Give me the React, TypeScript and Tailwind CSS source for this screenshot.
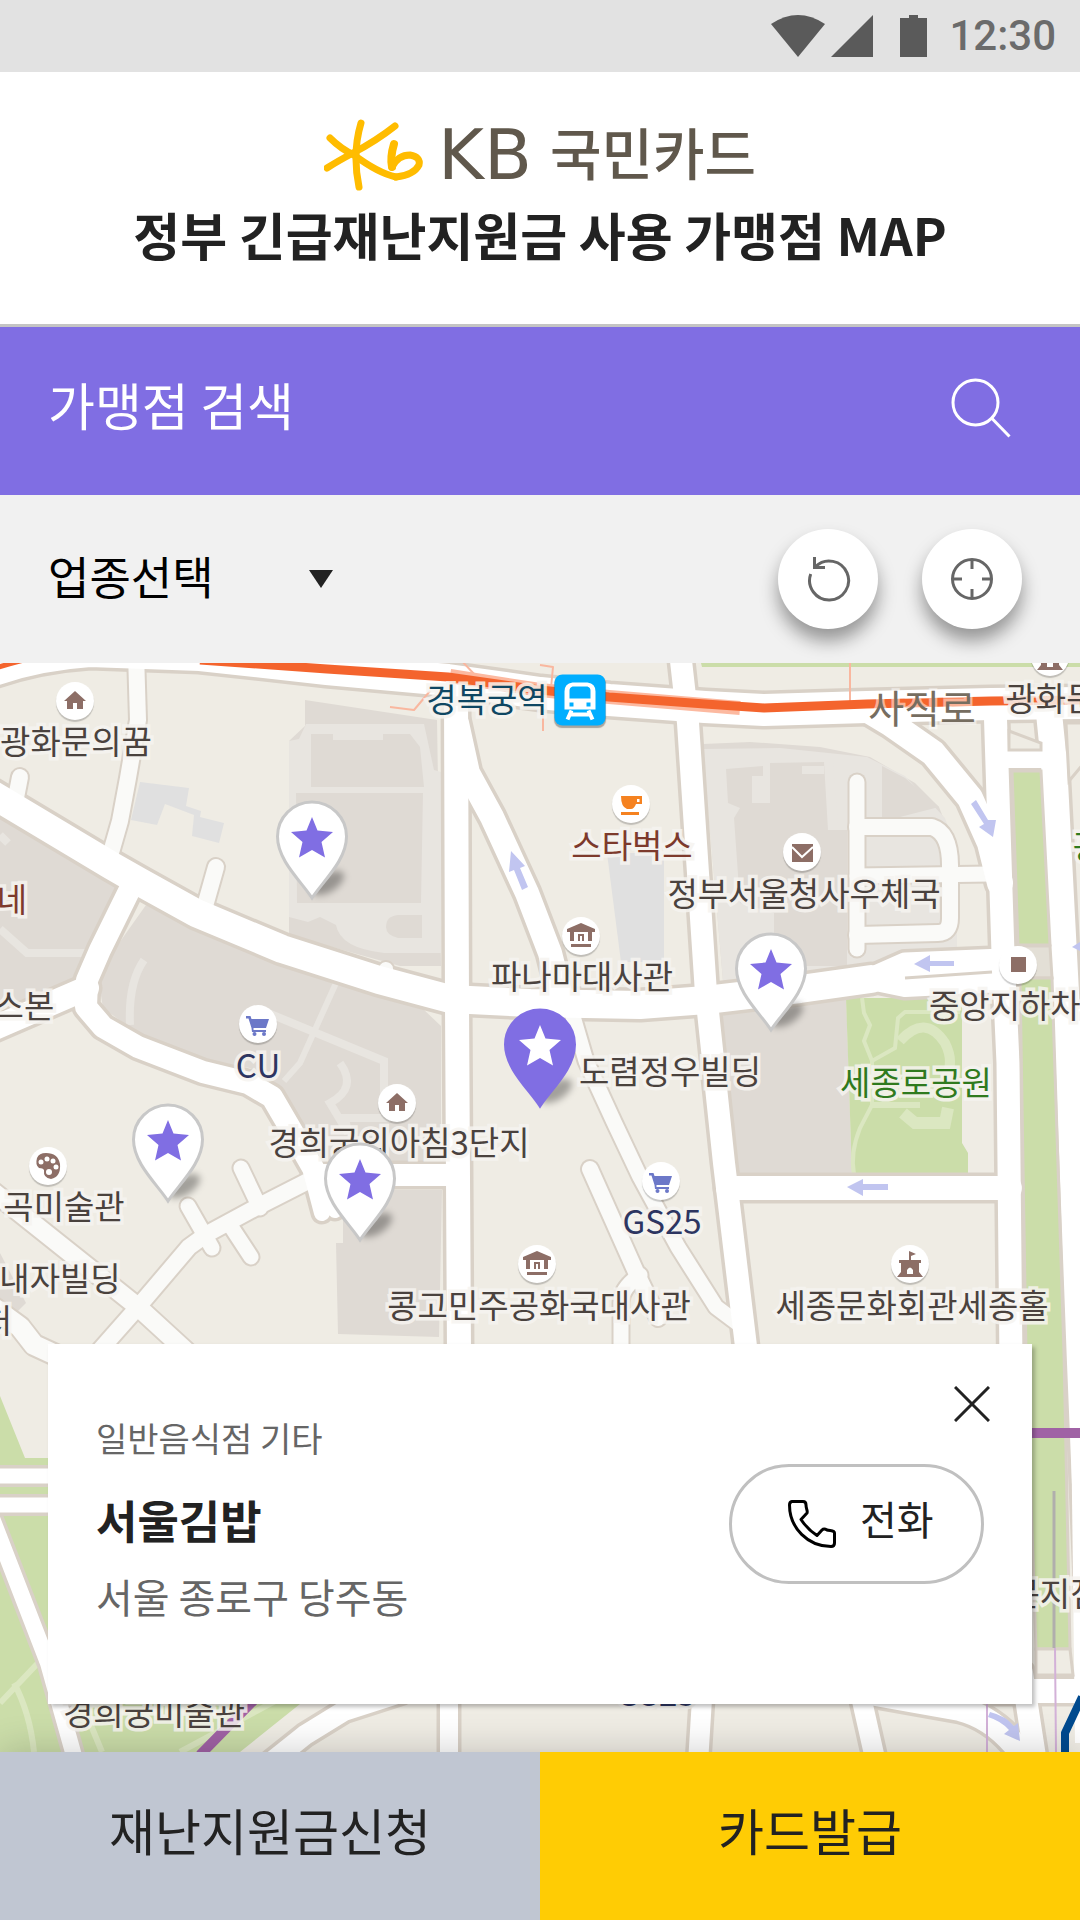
import { useState } from 'react';

const MAP_W = 1080;
const MAP_H = 1089;

const categories = ['업종선택', '일반음식점', '편의점', '카페', '병원'];

type Road = { d: string; w: number; soft?: boolean };

const roads: Road[] = [
  // alleys
  { d: 'M20 114 L14 145', w: 16, soft: true },
  { d: 'M136 -10 L138 57 L128 115 L120 158 L108 200', w: 16, soft: true },
  { d: 'M216 204 L203 250', w: 16, soft: true },
  { d: 'M386 306 L388 325', w: 14, soft: true },
  { d: 'M241 505 L260 545', w: 15, soft: true },
  { d: 'M188 543 L212 585', w: 15, soft: true },
  { d: 'M230 562 L251 594', w: 15, soft: true },
  { d: 'M312 516 L255 545 L207 571 L189 584 L138 644 L85 704', w: 16, soft: true },
  { d: 'M-10 526 L138 644 L210 710', w: 18, soft: true },
  { d: 'M-10 642 L20 664 L34 682 L60 694', w: 20, soft: true },
  { d: 'M857 119 V286', w: 15, soft: true },
  { d: 'M857 164 H932 Q950 170 950 202 V255 Q950 270 938 270 L857 272', w: 16, soft: true },
  { d: 'M857 213 L990 211', w: 15, soft: true },
  { d: 'M572 350 L586 398 L614 459 L640 514 L678 584 L716 644 L740 662', w: 15, soft: true },
  { d: 'M590 506 L636 609 L658 655', w: 16, soft: true },
  { d: 'M640 612 Q621 625 621 640 V700', w: 15, soft: true },
  // streets
  { d: 'M311 508 L322 550', w: 16 },
  { d: 'M322 512 L335 547', w: 16 },
  { d: 'M132 222 L100 287 L87 317 L86 344 L103 364 L138 384 L203 409 L248 420 L272 434 L293 470 L317 512 H458', w: 22 },
  { d: 'M87 325 L-10 367', w: 24 },
  { d: 'M-10 130 L112 203 L140 219 L196 250 L282 286 L379 317 L450 336 L530 340 L640 342 L706 337 L800 326 L871 316', w: 28 },
  { d: 'M456 30 L457 340 L459 690', w: 24 },
  { d: 'M457 60 L468 110 L492 154 L527 230 L550 290 L562 338', w: 24 },
  { d: 'M679 -20 L688 60 L706 330 L724 500 L748 700', w: 22 },
  { d: 'M871 316 L905 301 L1003 297', w: 23 },
  { d: 'M871 316 L905 323 L1003 318', w: 22 },
  { d: 'M728 525 H1010', w: 24 },
  { d: 'M870 48 L890 60 L933 90 L970 135 L990 180 L1000 220', w: 26 },
  { d: 'M995 40 L1003 290 L1008 400 L1011 700', w: 23 },
  { d: 'M1000 96 H1060', w: 18 },
  { d: 'M1048 40 L1054 100 L1066 330 L1080 700 L1094 1040', w: 26 },
  { d: 'M-20 12 Q30 -8 90 -12 L200 -8 L327 6 L448 17 L540 30 L609 37 L705 44 L764 47 L867 44 L991 41 L1090 40', w: 32 },
  // lower edge
  { d: 'M-10 813 H60', w: 15 },
  { d: 'M-10 842 H60', w: 15 },
  { d: 'M-10 850 L48 1000 L76 1100', w: 16 },
  { d: 'M400 1030 L344 1048 L305 1072 L270 1100', w: 20 },
  { d: 'M449 1030 V1100', w: 18 },
  { d: 'M703 1020 L698 1100', w: 20 },
  { d: 'M858 1020 L876 1100', w: 20 },
  { d: 'M870 1030 L960 1046 Q1000 1056 1028 1100', w: 24 },
  { d: 'M860 1028 H1090', w: 24 },
  { d: 'M1022 1010 L1036 1100', w: 22 },
];

const blocks = [
  { fill: '#dfdad4', d: 'M305 37 L437 57 L441 303 L400 303 L289 272 V78 L305 63Z' },
  { fill: '#e8e5e0', d: 'M306 61 H424 L434 107 L441 109 V290 H384 Q340 285 336 262 L320 254 L308 259 L289 254 V78 L299 76Z' },
  { fill: '#dfdad4', d: 'M311 71 H333 V77 H383 V71 H410 L420 84 L424 124 H311Z' },
  { fill: '#dfdad4', d: 'M296 130 H423 L421 240 H297Z' },
  { fill: '#dfdad4', d: 'M398 252 H422 V275 H398 Q386 272 386 264 Q386 253 398 252Z' },
  { fill: '#e0e0e0', d: 'M140 119 L189 125 L186 143 L201 148 L200 154 L224 160 L219 180 L192 173 L194 152 L165 141 L157 162 L131 157Z' },
  { fill: '#e0e0e0', d: 'M607 190 H664 V299 H621Z' },
  { fill: '#dfdad4', d: 'M0 150 L121 227 L77 315 L0 345Z' },
  { fill: '#dfdad4', d: 'M146 242 L196 266 L276 300 L441 352 V500 H312 L290 440 L250 405 L205 398 L140 372 L103 345 L99 320 L112 290Z' },
  { fill: '#efece4', d: 'M422 345 L441 350 V363Z' },
  { fill: '#dfdad4', d: 'M343 527 H442 L439 674 L338 671 L336 580 H343Z' },
  { fill: '#dfdad4', d: 'M703 81 L750 79 L820 84 L870 94 L915 120 L939 144 L957 190 V287 L875 300 L723 318Z' },
  { fill: '#e8e5e0', d: 'M703 86 L780 85 L867 94 L905 113 L945 155 L957 190 V287 L875 300 L723 318Z' },
  { fill: '#dfdad4', d: 'M726 106 L763 103 V140 H770 V100 L824 99 L828 167 H847 V303 H774 V250 L740 240 L734 155 L740 145 L728 140Z' },
  { fill: '#dfdad4', d: 'M882 103 L905 115 L939 144 L900 154 H882Z' },
  { fill: '#e8e5e0', d: 'M752 113 H770 V140 H752Z' },
  { fill: '#dfdad4', d: 'M722 350 L846 330 L852 512 H737Z' },
  { fill: '#cbdda9', d: 'M846 335 H962 V480 L968 490 V511 H852Z' },
  { fill: '#dfdad4', d: 'M0 590 L26 640 L14 652 L0 645Z' },
  { fill: '#cbdda9', d: 'M0 733 L25 795 H60 V850 H130 V1041 H300 L240 1089 H0Z' },
  { fill: '#cbdda9', d: 'M700 -4 H1080 V4 H702Z' },
];

const boulevard = [
  { fill: '#efece4', d: 'M1009 68 L1041 80 V87 H1009Z' },
  { fill: '#cbdda9', d: 'M1012 108 H1041 L1050 282 H1018Z' },
  { fill: '#e3dfd6', d: 'M1018 283 H1050 L1052 315 H1020Z' },
  { fill: '#cbdda9', d: 'M1020 315 H1052 L1064 690 L1070 986 H1036 L1026 690Z' },
  { fill: '#efece4', d: 'M1036 986 H1070 L1073 1012 H1036Z' },
  { fill: '#efece4', d: 'M1066 60 H1084 V100 L1069 118Z' },
];

type Poi = { x: number; y: number; icon: string };

const pois: Poi[] = [
  { x: 75, y: 38, icon: 'home' },
  { x: 631, y: 141, icon: 'cup' },
  { x: 802, y: 189, icon: 'mail' },
  { x: 581, y: 273, icon: 'bank' },
  { x: 1018, y: 302, icon: 'square' },
  { x: 258, y: 361, icon: 'cart' },
  { x: 397, y: 440, icon: 'home' },
  { x: 48, y: 503, icon: 'palette' },
  { x: 661, y: 518, icon: 'cart' },
  { x: 537, y: 601, icon: 'bank' },
  { x: 910, y: 601, icon: 'castle' },
  { x: 1050, y: -6, icon: 'castle' },
];

// x is the middle of the label
const labels = [
  { text: '광화문의꿈', x: 76, y: 79, tone: 'text-[#4a423e]' },
  { text: '경복궁역', x: 487, y: 37, tone: 'text-[#0f4763]' },
  { text: '광화문', x: 1051, y: 36, tone: 'text-[#4a423e]' },
  { text: '스타벅스', x: 632, y: 183, tone: 'text-[#7d3a2c]' },
  { text: '정부서울청사우체국', x: 804, y: 231, tone: 'text-[#4a423e]' },
  { text: '파나마대사관', x: 582, y: 314, tone: 'text-[#4a423e]' },
  { text: '중앙지하차도', x: 1020, y: 343, tone: 'text-[#4a423e]' },
  { text: '네', x: 12, y: 237, tone: 'text-[#7d3a2c]' },
  { text: '스본', x: 24, y: 343, tone: 'text-[#4a423e]' },
  { text: '광', x: 1088, y: 184, tone: 'text-[#2f7a1e]' },
  { text: 'CU', x: 258, y: 403, tone: 'text-[#2d3561]' },
  { text: '도렴정우빌딩', x: 670, y: 409, tone: 'text-[#4a423e]' },
  { text: '세종로공원', x: 916, y: 420, tone: 'text-[#2f7a1e]' },
  { text: '경희궁의아침3단지', x: 399, y: 480, tone: 'text-[#4a423e]' },
  { text: '곡미술관', x: 64, y: 544, tone: 'text-[#4a423e]' },
  { text: '내자빌딩', x: 60, y: 616, tone: 'text-[#4a423e]' },
  { text: '처', x: -3, y: 658, tone: 'text-[#4a423e]' },
  { text: 'GS25', x: 662, y: 559, tone: 'text-[#2d3561]' },
  { text: '콩고민주공화국대사관', x: 539, y: 643, tone: 'text-[#4a423e]' },
  { text: '세종문화회관세종홀', x: 912, y: 643, tone: 'text-[#4a423e]' },
  { text: '문지점', x: 1055, y: 931, tone: 'text-[#4a423e]' },
  { text: '경희궁미술관', x: 154, y: 1050, tone: 'text-[#4a423e]' },
  { text: 'GS25', x: 656, y: 1031, tone: 'text-[#2d3561]' },
];

const pins = [
  { x: 312, y: 236 },
  { x: 771, y: 368 },
  { x: 168, y: 539 },
  { x: 360, y: 578 },
  { x: 540, y: 444, active: true },
];

function place(x: number, y: number) {
  return { left: `${(x / MAP_W) * 100}%`, top: `${(y / MAP_H) * 100}%` };
}

function PoiGlyph({ icon }: { icon: string }) {
  if (icon === 'home') return <path fill="#8d6e66" d="M19 9 L30 19 H27 V27 H21 V21 H17 V27 H11 V19 H8Z" />;
  if (icon === 'cup') {
    return (
      <g fill="#f58220">
        <path fillRule="evenodd" d="M9 11 H30 V19 H24 Q22 24 19 24 H15 Q9 22 9 11Z M25 14 V17 H27.500 V14Z" />
        <path d="M9 27 H27 V30 H9Z" />
      </g>
    );
  }
  if (icon === 'mail') {
    return (
      <g>
        <path fill="#8d6e66" d="M9 11 H30 V29 H9Z" />
        <path fill="none" stroke="#fff" strokeWidth="2" d="M9 14 L19 24 L30 14" />
      </g>
    );
  }
  if (icon === 'bank') {
    return (
      <g>
        <path fill="#8d6e66" d="M19 6 L33 12 V15 H30 V24 H8 V15 H5 V12Z M9 27 H29 V30 H9Z" />
        <path fill="#fff" d="M12 15 H26 V17 H12Z M12 17 H16 V24 H12Z M18 19 H20 V24 H18Z M22 17 H26 V24 H22Z" />
      </g>
    );
  }
  if (icon === 'square') return <path fill="#8d6e66" d="M12 11 H27 V26 H12Z" />;
  if (icon === 'cart') {
    return (
      <g fill="#6c78c8">
        <path d="M7 11 H11.500 L12.500 14 H30 L27 23 H14.500 V25 H27 V27 H13 L12.500 23 L9.500 13.500 H7Z" />
        <circle cx="15.500" cy="29" r="2" />
        <circle cx="25" cy="29" r="2" />
      </g>
    );
  }
  if (icon === 'palette') {
    return (
      <g>
        <path fill="#8d6e66" d="M17 6 Q29 6 31 17 Q32 30 22 32 Q14 31 15 23 Q14 21 10 21 Q6 18 8 11 Q10 6 17 6Z" />
        <g fill="#fff">
          <circle cx="12" cy="15" r="2.500" />
          <circle cx="18" cy="12" r="2.500" />
          <circle cx="24" cy="14" r="2.500" />
          <circle cx="27" cy="20" r="2.500" />
          <circle cx="20" cy="25" r="3" />
        </g>
      </g>
    );
  }
  return (
    <g>
      <path fill="#8d6e66" d="M18 6 L25 9 L20 11 V15 H30 V18 H28 V27 L32 32 H6 L10 27 V18 H8 V15 H18Z" />
      <path fill="#fff" d="M16 29 V25 Q19 20 22 25 V29Z" />
    </g>
  );
}

function MapPin({ active }: { active?: boolean }) {
  return (
    <svg viewBox="0 0 104 110" className="w-[104px] h-[110px]" aria-hidden="true">
      <ellipse cx="68" cy="84" rx="18" ry="9" fill="#000" fillOpacity="0.32" transform="rotate(-32 68 84)" filter="url(#pin-blur)" />
      <path
        d="M52 99 C42 83 17.500 62 17.500 37.500 A34.500 34.500 0 0 1 86.500 37.500 C86.500 62 62 83 52 99Z"
        fill={active ? '#806ee3' : '#fff'}
        stroke={active ? '#806ee3' : '#c8c8c8'}
        strokeWidth="3"
      />
      <path
        d="M52 18 L57.500 31.500 L73 33 L61.500 43 L65 58.500 L52 51 L39 58.500 L42.500 43 L31 33 L46.500 31.500Z"
        fill={active ? '#fff' : '#806ee3'}
      />
    </svg>
  );
}

function MapDrawing() {
  return (
    <svg viewBox="0 0 1080 1089" className="block w-full" aria-hidden="true">
      <defs>
        <filter id="pin-blur" x="-50%" y="-50%" width="200%" height="200%">
          <feGaussianBlur stdDeviation="3.500" />
        </filter>
      </defs>
      <rect width="1080" height="1089" fill="#efece4" />
      {blocks.map((b) => (
        <path key={b.d} d={b.d} fill={b.fill} />
      ))}

      {/* footpaths inside the blocks */}
      <g fill="none" stroke="#e8e5e0" strokeWidth="8">
        <path d="M0 266 L27 290 H85 M0 172 L8 180" />
        <path d="M144 297 Q128 320 130 362" />
        <path d="M336 320 L300 400 L284 418" strokeWidth="6" />
        <path d="M268 350 L384 398 V440" />
        <path d="M340 400 Q358 425 330 440 L348 470 L345 455 H390" />
        <path d="M829 100 L834 160 M802 107 H824" />
      </g>
      <g fill="none" stroke="#dbe7c1" strokeWidth="4">
        <path d="M862 335 L864 350 L870 362 L864 378 L872 398 L895 385 L898 355 L905 349 H960" />
        <path d="M872 398 V442 L860 465 Q850 490 854 511" />
        <path d="M872 442 H920" strokeWidth="6" />
        <path d="M900 378 Q925 350 945 380 Q955 400 945 415" strokeWidth="10" />
        <path d="M903 450 L915 460 H945 L948 445" strokeWidth="12" />
        <path d="M0 1040 L38 1000 M14 1020 Q30 1050 34 1089 M90 1060 L102 1089 M180 1089 L290 1030" strokeWidth="6" />
      </g>

      <g fill="none" strokeLinejoin="round" strokeLinecap="round">
        {roads.map((r) => (
          <path key={r.d} d={r.d} stroke="#d9d1c7" strokeWidth={r.w + (r.soft ? 4 : 7)} />
        ))}
        {roads.map((r) => (
          <path key={r.d} d={r.d} stroke={r.soft ? '#fafaf8' : '#fff'} strokeWidth={r.w} />
        ))}
      </g>
      <path stroke="#d9d1c7" strokeWidth="3" d="M905 315 L992 309" />
      <path fill="#fff" d="M1066 340 L1080 340 V1080 H1075Z" />
      {boulevard.map((b) => (
        <path key={b.d} d={b.d} fill={b.fill} stroke="#d9d1c7" strokeWidth="3" />
      ))}

      {/* arterial road */}
      <g fill="none" strokeLinejoin="round">
        <path stroke="#f9b79f" strokeWidth="2" d="M850 0 V38 M390 44 L414 47 L430 28 M460 -4 L475 12 M540 2 L553 4 L551 25 M543 48 V68" />
        <path stroke="#fcb9a0" strokeWidth="14" d="M450 13 L540 27 L609 34 L740 45" />
        <path stroke="#f4642d" strokeWidth="9" d="M200 -3 L327 6 L448 14 L540 27 L609 34 L705 41 L764 45 L867 41 L991 38 L1080 37" />
        <path stroke="#f4642d" strokeWidth="5" d="M-4 5 Q8 1 24 -3" />
      </g>

      {/* one-way arrows */}
      <g fill="#c1c5f0">
        <path d="M511 188 L525 203 L520 205 L528 224 L522 227 L514 207 L509 209Z" />
        <path d="M976 137 L988 157 L996 157 L993 174 L979 164 L984 161 L971 141Z" />
        <path d="M914 301 L930 292 V298 H954 V303 H930 V309Z" />
        <path d="M847 524 L863 516 V521 H888 V527 H863 V533Z" />
        <path d="M990 1049 Q1006 1053 1014 1063 L1018 1060 L1020 1078 L1004 1071 L1009 1067 Q1001 1058 988 1054Z" />
        <path d="M1072 284 L1080 279 V288Z" />
      </g>

      {/* subway lines */}
      <g fill="none">
        <path stroke="#a062a5" strokeWidth="10" d="M1030 770 H1080 M255 1036 L200 1092" />
        <path stroke="#b0aeac" strokeWidth="3" d="M1054 828 V985" />
        <path stroke="#d3b1d8" strokeWidth="2" d="M1055 985 L1056 1089 M987 1036 V1089" />
        <path stroke="#004a8f" strokeWidth="8" d="M1082 1034 L1065 1070 V1092" strokeLinejoin="round" />
      </g>
    </svg>
  );
}

function StoreMap() {
  return (
    <div className="relative w-full overflow-hidden">
      <MapDrawing />

      <span
        className="absolute -translate-x-1/2 -translate-y-1/2 whitespace-nowrap pb-1 text-[39px] leading-[40px] text-[#766d60] [paint-order:stroke_fill] [-webkit-text-stroke:5px_rgba(255,255,255,0.5)]"
        style={place(922, 45)}
      >
        사직로
      </span>
      {labels.map((l) => (
        <span
          key={`${l.text}${l.y}`}
          className={`absolute -translate-x-1/2 -translate-y-1/2 whitespace-nowrap pb-1 text-[33px] leading-[40px] [paint-order:stroke_fill] [-webkit-text-stroke:7px_rgba(246,244,240,0.85)] ${l.tone}`}
          style={place(l.x, l.y)}
        >
          {l.text}
        </span>
      ))}
      {pois.map((p) => (
        <span
          key={`${p.x}-${p.y}`}
          className="absolute -translate-x-1/2 -translate-y-1/2 size-[38px] rounded-full bg-white shadow-[0_2px_1px_rgba(0,0,0,0.2)]"
          style={place(p.x, p.y)}
        >
          <svg viewBox="0 0 38 38" className="size-full" aria-hidden="true">
            <PoiGlyph icon={p.icon} />
          </svg>
        </span>
      ))}

      {/* subway station */}
      <span
        className="absolute -translate-x-1/2 -translate-y-1/2 size-[51px] rounded-lg bg-[#00aeff] shadow-[0_2px_1px_rgba(0,0,0,0.3)]"
        style={place(580, 37)}
      >
        <svg viewBox="0 0 51 51" className="size-full" aria-hidden="true">
          <path fill="#fff" fillRule="evenodd" d="M18 8 H33 Q41 9 41 17 V35 H10 V17 Q10 9 18 8Z M18 12 Q15 13 15 16 V24 H36 V16 Q36 13 33 12Z M15 28 V32 H19 V28Z M32 28 V32 H36 V28Z" />
          <path fill="none" stroke="#fff" strokeWidth="4" d="M17 36 L13 45 M34 36 L38 45 M16 40 H35" />
        </svg>
      </span>

      {pins.map((p) => (
        <button
          key={`${p.x}-${p.y}`}
          type="button"
          aria-label="가맹점"
          className="absolute -translate-x-1/2 -translate-y-[100px]"
          style={place(p.x, p.y)}
        >
          <MapPin active={p.active} />
        </button>
      ))}
    </div>
  );
}

function StoreCard({ onClose }: { onClose: () => void }) {
  return (
    <section className="absolute inset-x-12 bottom-12 flex justify-between bg-white pl-12 pt-[70px] pb-[78px] shadow-[3px_3px_4px_rgba(0,0,0,0.25)]">
      <div>
        <p className="text-[34px] leading-[48px] text-[#666]">일반음식점 기타</p>
        <h2 className="mt-7 text-[45px] leading-[60px] font-bold text-[#222]">서울김밥</h2>
        <p className="mt-4 text-[40px] leading-[60px] text-[#666]">서울 종로구 당주동</p>
      </div>
      <a
        href="tel:02-000-0000"
        className="mr-12 mt-[50px] flex h-[120px] w-[255px] items-center gap-6 rounded-full border-[3px] border-[#c0c0c0] pl-14 text-[40px] leading-[60px] text-[#222]"
      >
        <svg viewBox="0 0 48 48" className="size-12" fill="none" stroke="#000" strokeWidth="3" strokeLinejoin="round" aria-hidden="true">
          <path d="M4 1.500 H15 Q18 1.500 18 5 C18 9 20 11 19 13 L13 19.500 C18 27 22 31 29 35.500 L34 30 Q36 28 39 30 C42 31 46.500 30 46.500 33 V43 Q46.500 46.500 43 46.500 C20 46.500 1.500 28 1.500 5 Q1.500 2 4 1.500Z" />
        </svg>
        <span className="pb-3">전화</span>
      </a>
      <button type="button" aria-label="닫기" className="absolute right-[42px] top-[42px]" onClick={onClose}>
        <svg viewBox="0 0 36 36" className="size-9" stroke="#222" strokeWidth="3" aria-hidden="true">
          <path d="M1 1 L35 35 M35 1 L1 35" />
        </svg>
      </button>
    </section>
  );
}

export default function App() {
  const [keyword, setKeyword] = useState('');
  const [category, setCategory] = useState(categories[0]);
  const [cardOpen, setCardOpen] = useState(true);

  return (
    <div className="flex min-h-screen flex-col bg-white font-['Noto_Sans_CJK_KR',sans-serif]">
      {/* Status bar */}
      <div className="flex h-[72px] items-center justify-end bg-[#e2e2e2] pr-6">
        <svg viewBox="0 0 156 42" className="h-[42px] w-[156px]" fill="#5a5a5a" aria-hidden="true">
          <path d="M0 9 Q27 -9 54 9 L27 42Z" />
          <path d="M60 42 L102 0 V42Z" />
          <path d="M129 3 H138 V0 H147 V3 H156 V42 H129Z" />
        </svg>
        <span className="ml-[22px] font-['Roboto',sans-serif] text-[42px] font-medium leading-[48px] text-[#6b6b6b]">12:30</span>
      </div>

      {/* Header */}
      <header className="flex flex-col items-center border-b-[3px] border-[#c4c4c4] pt-[47px] pb-[60px]">
        <div className="flex h-[72px] items-center text-[#60584c]">
          <svg viewBox="0 0 100 72" className="h-[72px] w-[100px]" fill="none" stroke="#ffbc00" strokeLinecap="round" aria-hidden="true">
            <path strokeWidth="7" d="M37 4 Q28 34 35 68" />
            <path strokeWidth="7" d="M71 7 Q52 22 29 34 Q14 42 3 49" />
            <path strokeWidth="7" d="M6 19 Q17 30 30 36 Q54 54 72 58" />
            <path strokeWidth="8" d="M70 25 Q66 38 68 48" />
            <path strokeWidth="7" d="M68 48 Q74 36 86 36 Q97 38 95 46 Q90 56 72 58" />
          </svg>
          <span className="ml-[14px] font-['DejaVu_Sans',sans-serif] text-[70px] leading-[72px]">KB</span>
          <span className="ml-[18px] pb-2 text-[56px] leading-[64px] font-medium">국민카드</span>
        </div>
        <h1 className="mt-[13px] text-[51px] leading-[60px] font-semibold text-[#222]">정부 긴급재난지원금 사용 가맹점 MAP</h1>
      </header>

      {/* Search */}
      <form className="flex h-[168px] items-center bg-[#806ee3] pl-12 pr-[69px]" onSubmit={(e) => e.preventDefault()}>
        <input
          type="text"
          aria-label="가맹점 검색"
          placeholder="가맹점 검색"
          value={keyword}
          onChange={(e) => setKeyword(e.target.value)}
          className="min-w-0 flex-1 bg-transparent pb-[14px] text-[51px] leading-[60px] text-white outline-none placeholder:text-white"
        />
        <button type="submit" aria-label="검색">
          <svg viewBox="0 0 66 66" className="size-[66px]" fill="none" stroke="#fff" strokeWidth="3" aria-hidden="true">
            <circle cx="30.500" cy="24.500" r="22.500" />
            <path d="M47 40.500 L64.500 58.500" />
          </svg>
        </button>
      </form>

      {/* Filter */}
      <div className="flex h-[168px] items-center justify-between bg-[#f1f1f1] pl-12 pr-[58px]">
        <div className="relative">
          <select
            aria-label="업종선택"
            value={category}
            onChange={(e) => setCategory(e.target.value)}
            className="block w-[285px] appearance-none bg-transparent pb-[6px] text-[45px] leading-[60px] text-black outline-none"
          >
            {categories.map((c) => (
              <option key={c}>{c}</option>
            ))}
          </select>
          <svg viewBox="0 0 24 18" className="pointer-events-none absolute right-0 top-1/2 h-[18px] w-6 -translate-y-1/2" aria-hidden="true">
            <path fill="#222" d="M0 0 H24 L12 18Z" />
          </svg>
        </div>
        <div className="flex gap-11">
          <button type="button" aria-label="새로고침" className="flex size-[100px] items-center justify-center rounded-full bg-white shadow-[0_12px_18px_rgba(0,0,0,0.38)]">
            <svg viewBox="0 0 48 48" className="size-12" fill="none" stroke="#666" strokeWidth="3" aria-hidden="true">
              <path d="M6.700 19 A19.500 19.500 0 1 0 11.500 11.500" />
              <path d="M10.500 2 V12.500 H21" />
            </svg>
          </button>
          <button type="button" aria-label="현재 위치" className="flex size-[100px] items-center justify-center rounded-full bg-white shadow-[0_12px_18px_rgba(0,0,0,0.38)]">
            <svg viewBox="0 0 48 48" className="size-12" fill="none" stroke="#666" strokeWidth="3" aria-hidden="true">
              <circle cx="24" cy="24" r="19.500" />
              <path d="M24 4 V14 M24 34 V44 M4 24 H14 M34 24 H44" />
            </svg>
          </button>
        </div>
      </div>

      {/* Map */}
      <main className="relative overflow-hidden">
        <StoreMap />
        {cardOpen && <StoreCard onClose={() => setCardOpen(false)} />}
      </main>

      {/* Bottom actions */}
      <nav className="relative grid h-[168px] grid-cols-2 text-[50px] leading-[60px] text-[#222] shadow-[0_0_36px_rgba(0,0,0,0.2)]">
        <a href="#apply" className="flex items-center justify-center bg-[#c0c6d2] pb-[14px]">재난지원금신청</a>
        <a href="#issue" className="flex items-center justify-center bg-[#ffcc04] pb-[14px]">카드발급</a>
      </nav>
    </div>
  );
}
